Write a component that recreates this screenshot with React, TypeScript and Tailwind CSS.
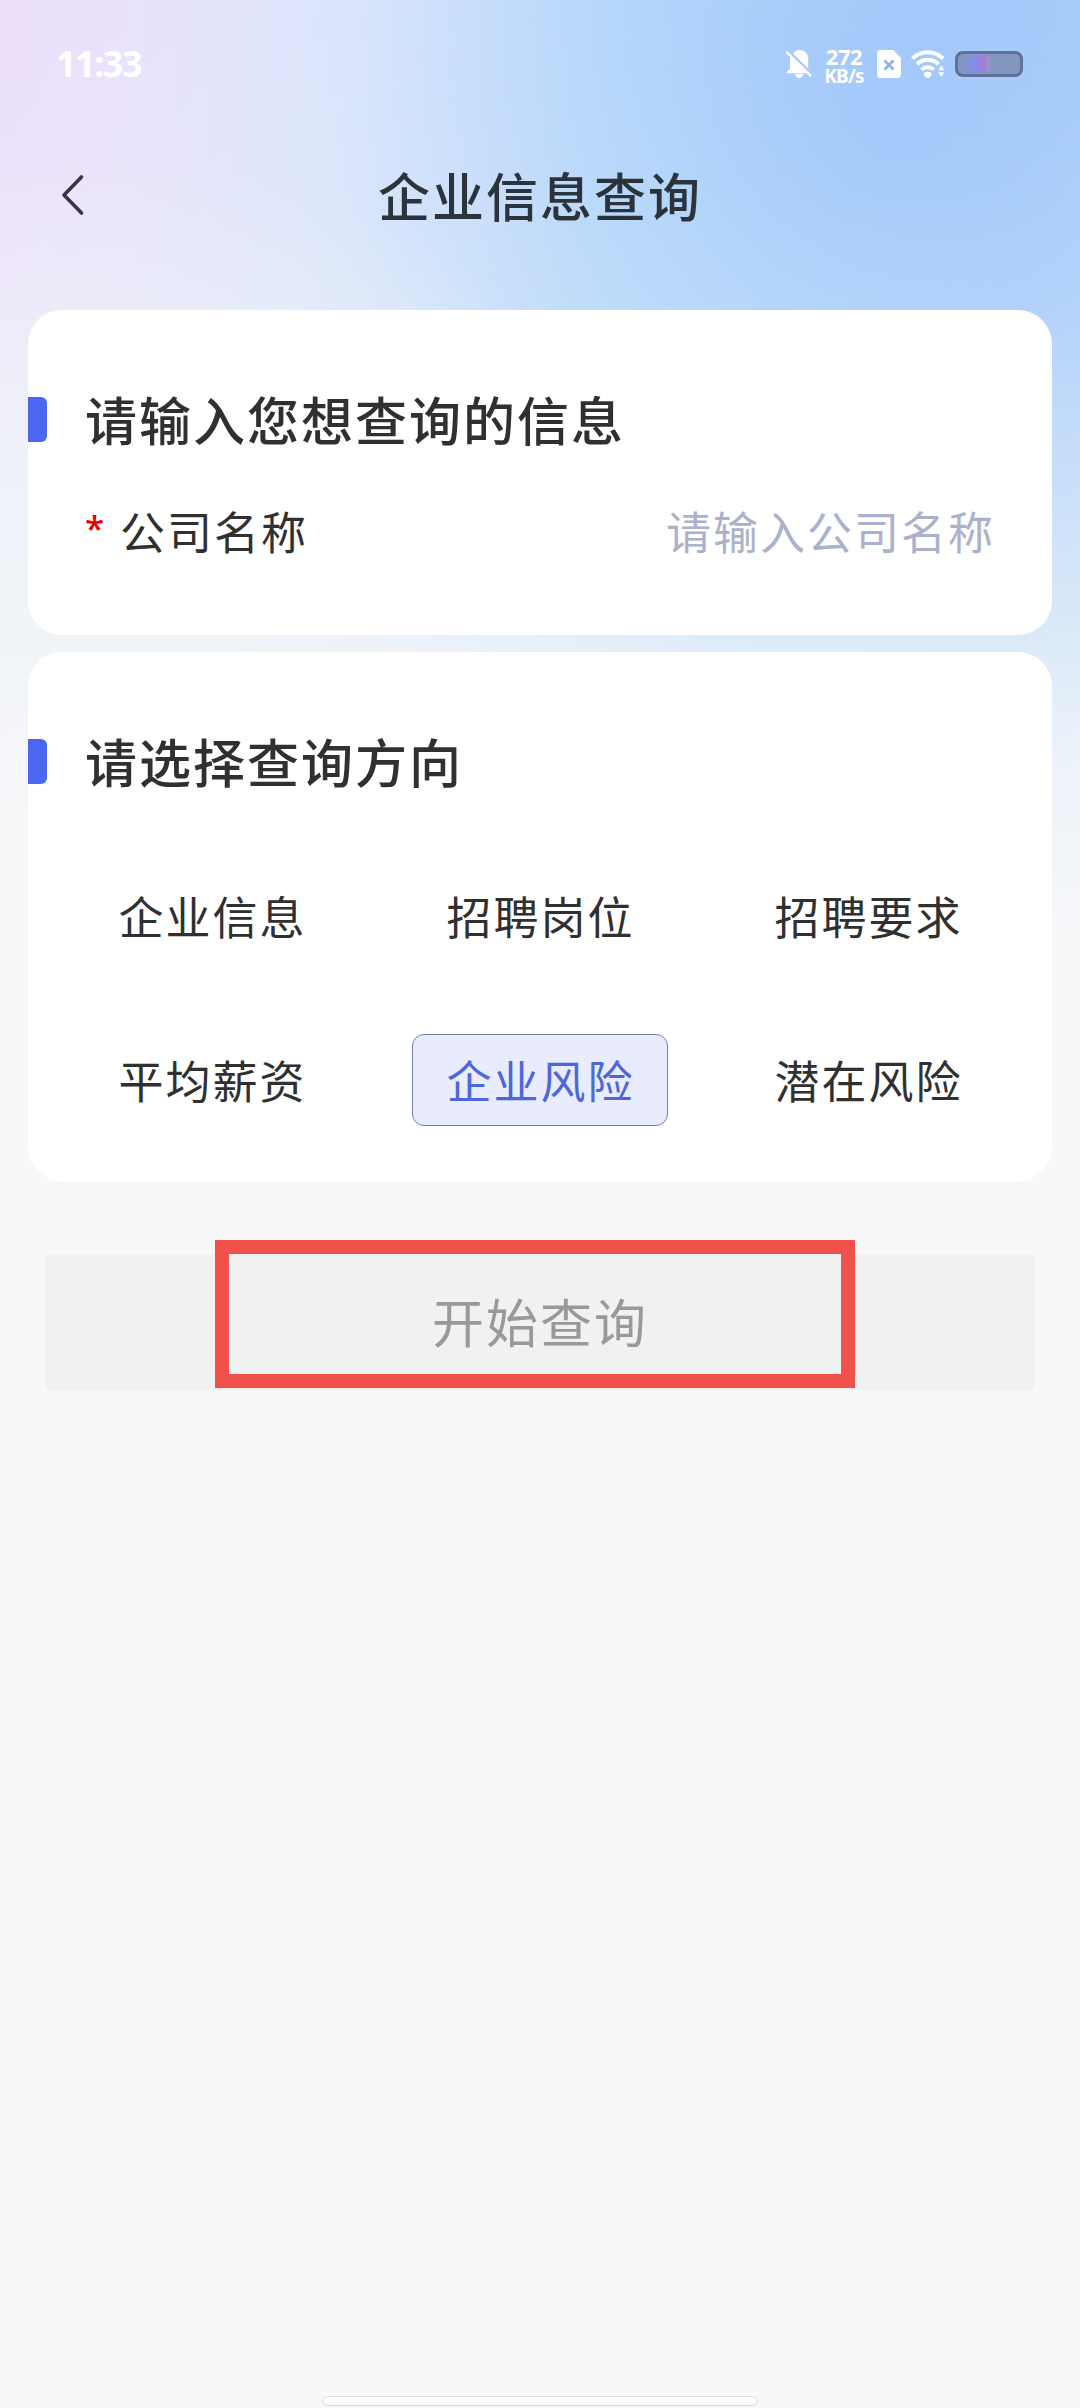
import React, { useState } from 'react';
import clsx from 'clsx';

const OPTIONS = ['企业信息', '招聘岗位', '招聘要求', '平均薪资', '企业风险', '潜在风险'];

function BellOffIcon() {
  return (
    <svg width="26" height="30" viewBox="0 0 26 30" fill="none">
      <path d="M4.600 8.200 20.500 24.300H1v-1.500l3-3V11c0-1 .2-2 .6-2.800Z" fill="#fff" />
      <path d="M7 4.600C8.500 2.200 11 1 13.500 1c5 0 8.700 3.800 8.700 8.800v10L7 4.600Z" fill="#fff" />
      <path d="M9 25h8.500c-.6 2.500-2.200 4-4.200 4S9.600 27.500 9 25Z" fill="#fff" />
      <path d="M1 3.500 24.500 26.500" stroke="#fff" strokeWidth="2.200" strokeLinecap="round" />
    </svg>
  );
}

function SimIcon() {
  return (
    <svg width="24" height="28" viewBox="0 0 24 28" fill="none">
      <path d="M4 0h12.500L24 8v16a4 4 0 0 1-4 4H4a4 4 0 0 1-4-4V4a4 4 0 0 1 4-4Z" fill="#fff" />
      <path d="m7.500 10.500 9 9m0-9-9 9" stroke="#8fb2e0" strokeWidth="2.600" />
    </svg>
  );
}

function WifiIcon() {
  return (
    <svg width="34" height="28" viewBox="0 0 34 28" fill="none">
      <g stroke="#fff" strokeWidth="4">
        <path d="M1.500 8.500C10 .300 23.500.300 32 8.500" />
        <path d="M6 14.200c6-5.800 15.500-5.800 21.500 0" />
        <path d="M10.500 19.600c3.600-3.300 8.800-3.300 12.400 0" />
      </g>
      <path d="M12.800 23.200c2.300-1.900 5.500-1.900 7.800 0 0 2.800-1.700 4.600-3.900 4.600s-3.900-1.800-3.900-4.600Z" fill="#fff" />
      <path d="m30.300 15.500 2.900 4.700h-5.800l2.900-4.700Zm0 11.500-2.900-4.700h5.800L30.300 27Z" fill="#fff" />
    </svg>
  );
}

function StatusBar() {
  return (
    <div className="flex h-[128px] items-center justify-between pr-[57px] pl-[56px] text-white">
      <span className="pb-[1px] font-['Noto_Sans'] text-[36px] leading-none font-bold tracking-[-1.500px]">11:33</span>
      <div className="flex items-center">
        <BellOffIcon />
        <div className="ml-[13px] flex w-[38px] flex-col items-center pt-[3px] font-['Noto_Sans'] font-bold">
          <span className="text-[22px] leading-[20px] tracking-[-0.500px]">272</span>
          <span className="text-[19px] leading-[20px] tracking-[-0.800px]">KB/s</span>
        </div>
        <div className="ml-[14px]">
          <SimIcon />
        </div>
        <div className="ml-[10px]">
          <WifiIcon />
        </div>
        <div className="ml-[10px] flex h-[26px] w-[68px] rounded-[8px] border-[3px] border-[#5f7098] bg-[#8296bf] py-[2px] pl-[6px]">
          <div className="w-[22px] bg-linear-to-r from-[#8296cf] via-[#8789ea] to-[#ab78d8]" />
          <div className="ml-px w-[3px] bg-[#b484dc]" />
        </div>
      </div>
    </div>
  );
}

function NavBar({ title }: { title: string }) {
  return (
    <header className="grid h-[134px] grid-cols-[120px_1fr_120px] items-center">
      <button className="pl-[60px]" aria-label="返回">
        <svg width="26" height="42" viewBox="0 0 26 42" fill="none">
          <path d="M21.500 3 4 21l17.500 18" stroke="#3a3444" strokeWidth="3.600" strokeLinecap="round" strokeLinejoin="round" />
        </svg>
      </button>
      <h1 className="text-center text-[52px] leading-none font-medium tracking-[2px] text-[#2b343c]">{title}</h1>
    </header>
  );
}

function SectionTitle({ children }: { children: React.ReactNode }) {
  return (
    <div className="flex h-[45px] items-center">
      <span className="h-[45px] w-[19px] rounded-r-[6px] bg-[#4a66f2]" />
      <h2 className="ml-[38px] pb-[2px] text-[52px] leading-none font-medium tracking-[2px] text-[#303030]">{children}</h2>
    </div>
  );
}

export default function App() {
  const [selected, setSelected] = useState('企业风险');

  return (
    <div className="flex h-[2408px] w-[1080px] flex-col overflow-hidden bg-[#f8f8f9] bg-[linear-gradient(180deg,rgba(247,248,249,0)_0px,rgba(244,246,248,0.14)_300px,rgba(241,245,248,0.38)_450px,rgba(241,245,248,0.68)_640px,rgba(247,248,249,0.86)_760px,rgba(248,248,249,1)_960px),radial-gradient(ellipse_700px_480px_at_0px_620px,rgba(239,245,248,0.9)_0px,rgba(239,245,248,0.55)_50%,rgba(239,245,248,0)_100%),radial-gradient(circle_at_900px_130px,rgba(156,196,251,0.9)_0px,rgba(160,200,251,0.5)_240px,rgba(165,205,251,0)_560px),linear-gradient(95deg,#ecdffc_0%,#e9e2fb_10%,#dde5fb_24%,#d2e3fb_36%,#c2dffa_48%,#b6d9fa_62%,#add0fa_80%,#b4d4fa_100%)] font-['Noto_Sans_CJK_SC',sans-serif]">
      <StatusBar />
      <NavBar title="企业信息查询" />

      <main className="mt-[48px] flex flex-col gap-[17px] px-[28px]">
        <section className="h-[325px] rounded-[34px] bg-white pt-[87px]">
          <SectionTitle>请输入您想查询的信息</SectionTitle>
          <label className="mt-[53px] flex h-[70px] items-center pr-[57px] pl-[57px] text-[45px] leading-none tracking-[2px]">
            <span className="w-[35px] pb-[6px] font-['Noto_Sans'] text-[35px] font-medium text-[#e60000]">*</span>
            <span className="text-[#303030]">公司名称</span>
            <input
              className="ml-auto w-[500px] text-right outline-none placeholder:text-[#acb1cb]"
              placeholder="请输入公司名称"
            />
          </label>
        </section>

        <section className="h-[529px] rounded-[34px] bg-white pt-[87px]">
          <SectionTitle>请选择查询方向</SectionTitle>
          <div className="mt-[86px] grid grid-cols-3 gap-[72px] px-[56px]">
            {OPTIONS.map((option) => (
              <button
                key={option}
                onClick={() => setSelected(option)}
                className={clsx(
                  'h-[92px] rounded-[12px] border pb-[2px] pl-px text-center text-[45px] leading-none tracking-[2px]',
                  option === selected
                    ? 'border-[#777da8] bg-[#e9ecfe] text-[#4d66dc]'
                    : 'border-transparent text-[#303030]',
                )}
              >
                {option}
              </button>
            ))}
          </div>
        </section>
      </main>

      <div className="relative mx-[45px] mt-[73px]">
        <button className="h-[136px] w-full rounded-[6px] bg-[#f0f2f1] pb-[2px] text-[52px] leading-none tracking-[2px] text-[#979a98]">
          开始查询
        </button>
        {/* highlight frame over the submit button */}
        <div className="pointer-events-none absolute -top-[14px] left-[170px] h-[148px] w-[640px] border-[14px] border-[#f0524b]" />
      </div>

      <div className="mx-auto mt-auto mb-[2px] h-[10px] w-[436px] rounded-full border border-[#dcdcdc] bg-[#fcfcfc]" />
    </div>
  );
}
